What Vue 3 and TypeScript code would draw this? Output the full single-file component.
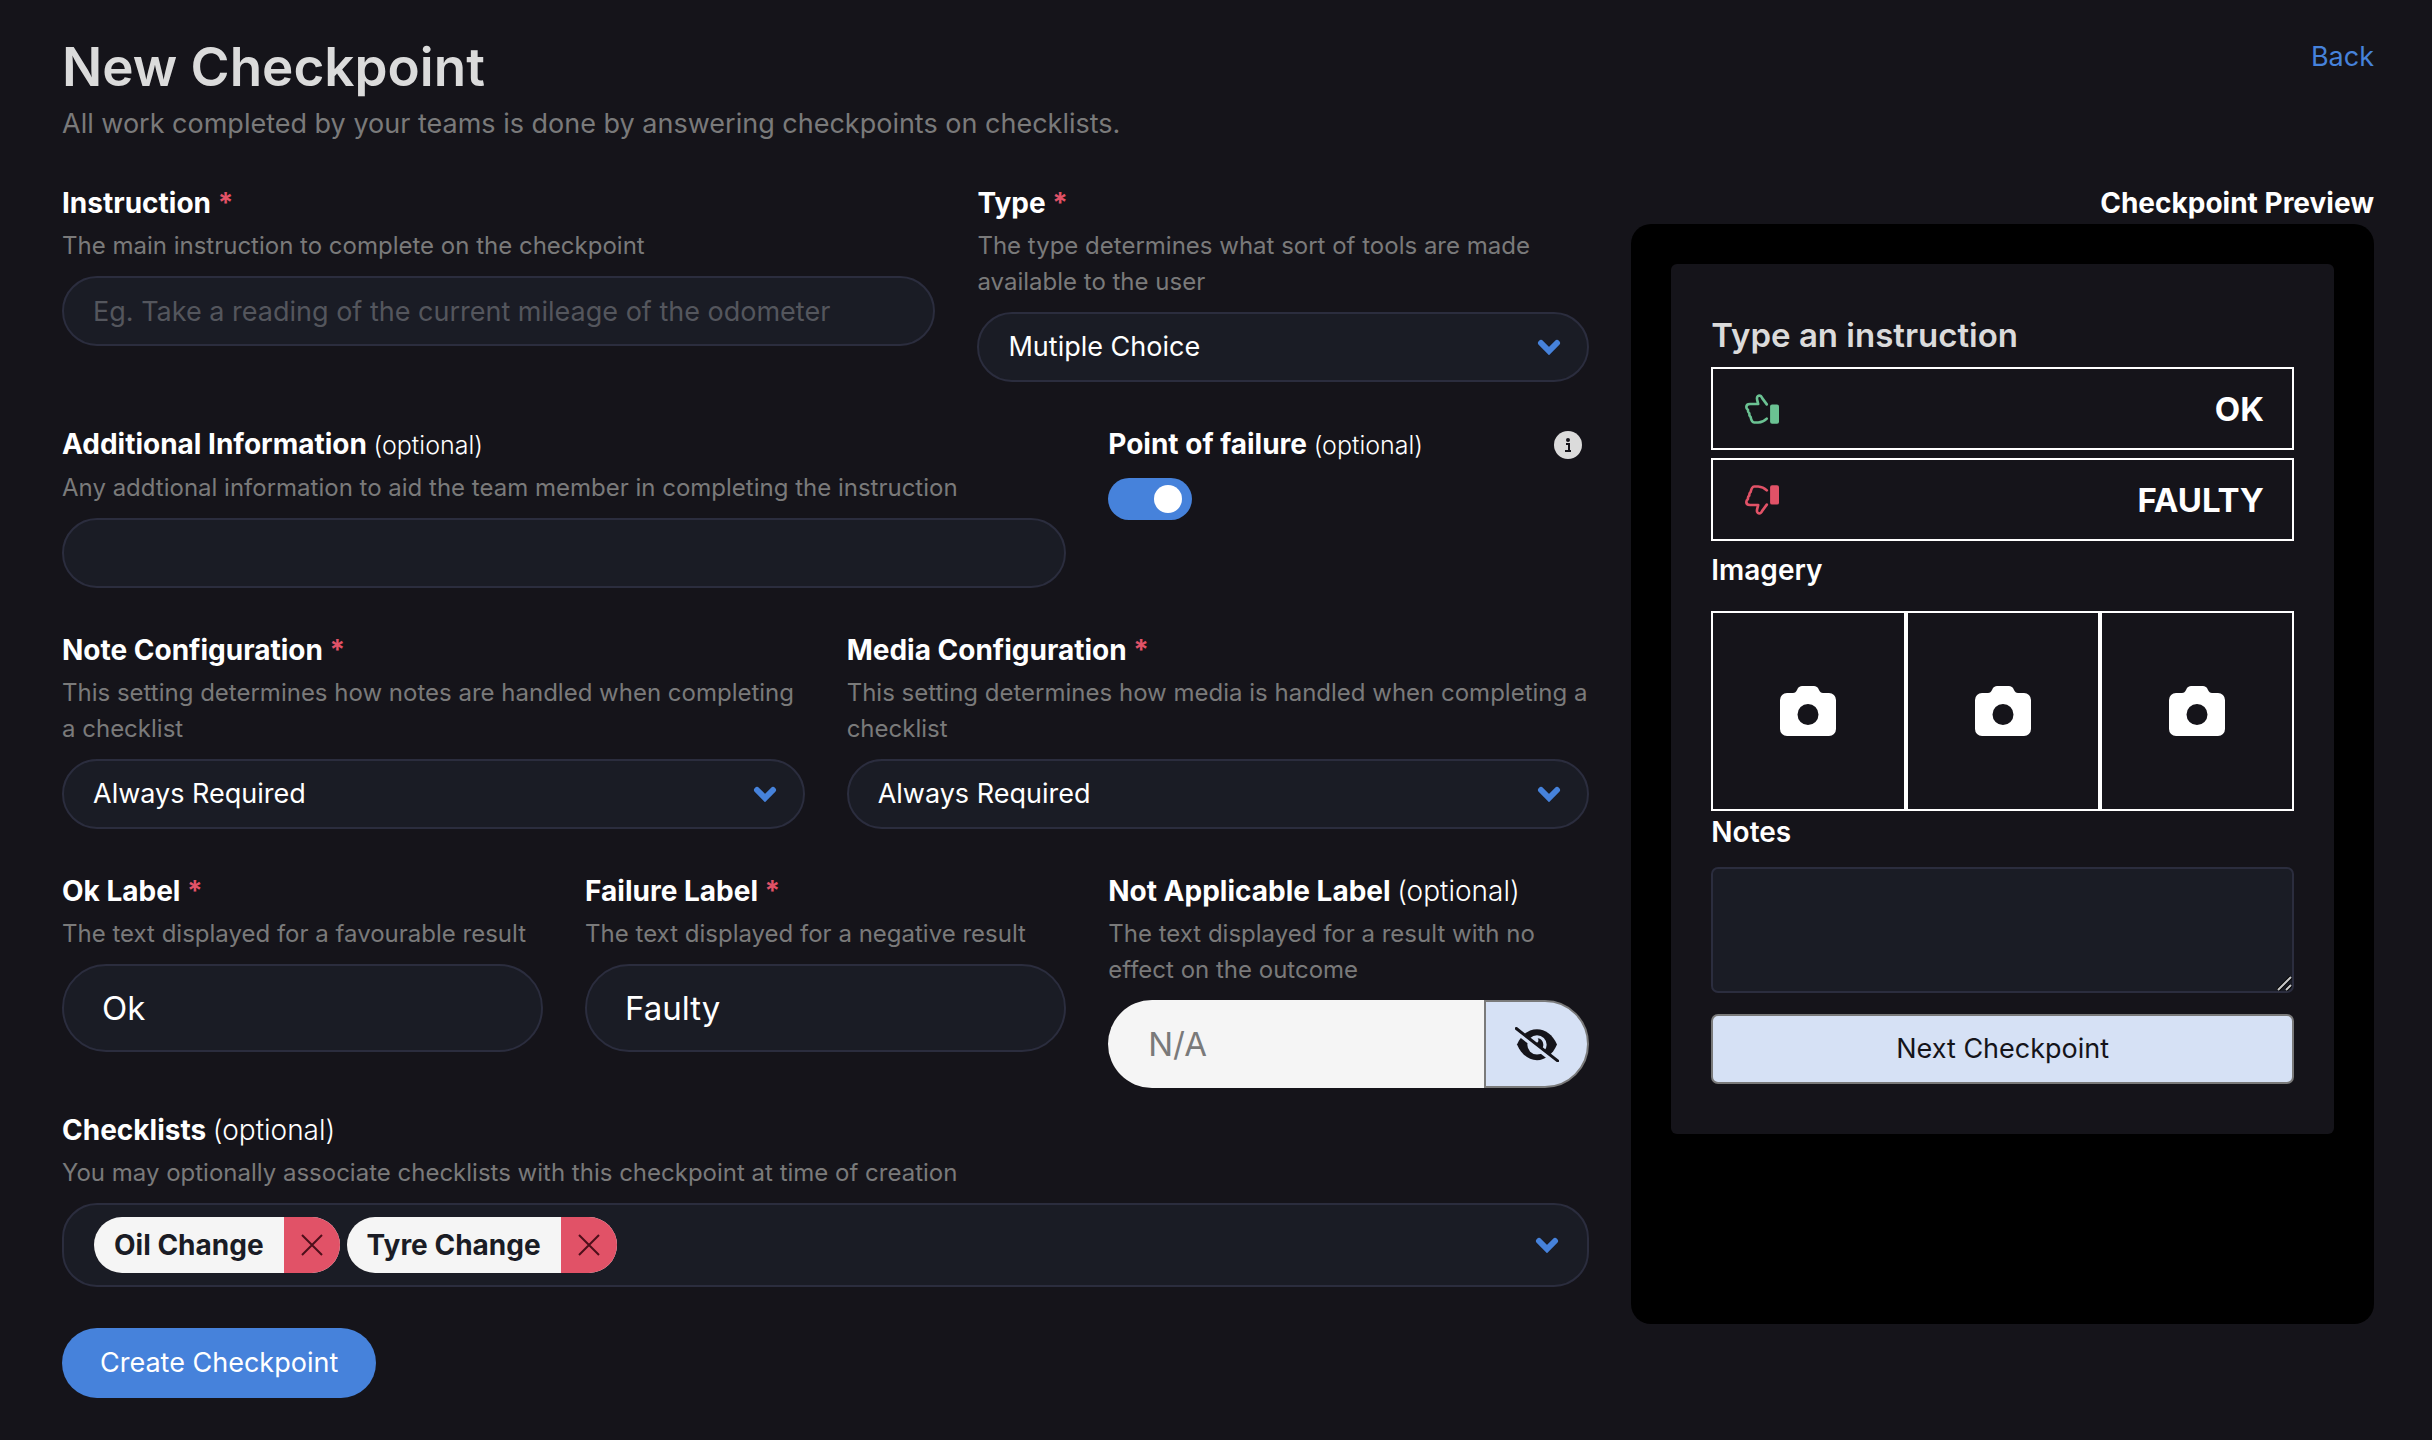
<script setup lang="ts">
import { ref } from 'vue'

const instruction = ref('')
const additional = ref('')
const pointOfFailure = ref(true)
const okLabel = ref('Ok')
const failureLabel = ref('Faulty')
const naLabel = ref('')
const notes = ref('')
const checklists = ref<string[]>(['Oil Change', 'Tyre Change'])

function removeChecklist(name: string): void {
  checklists.value = checklists.value.filter((item) => item !== name)
}
</script>

<template>
  <main class="page">
    <header class="header">
      <div>
        <h1 class="title">New Checkpoint</h1>
        <p class="subtitle">All work completed by your teams is done by answering checkpoints on checklists.</p>
      </div>
      <a class="back" href="#">Back</a>
    </header>

    <div class="layout">
      <form class="form" @submit.prevent>
        <div class="row">
          <div class="field span-7">
            <label class="label" for="instruction">Instruction <span class="required">*</span></label>
            <p class="help">The main instruction to complete on the checkpoint</p>
            <input id="instruction" v-model="instruction" class="input" type="text" placeholder="Eg. Take a reading of the current mileage of the odometer" />
          </div>
          <div class="field span-5">
            <label class="label" for="type">Type <span class="required">*</span></label>
            <p class="help">The type determines what sort of tools are made available to the user</p>
            <div class="select">
              <select id="type" class="input"><option>Mutiple Choice</option></select>
              <svg class="chevron" viewBox="0 0 24 16"><path d="M4 4l8 8 8-8" /></svg>
            </div>
          </div>
        </div>

        <div class="row">
          <div class="field span-8">
            <label class="label" for="additional">Additional Information <span class="optional small">(optional)</span></label>
            <p class="help">Any addtional information to aid the team member in completing the instruction</p>
            <input id="additional" v-model="additional" class="input" type="text" />
          </div>
          <div class="field span-4">
            <div class="label-line">
              <label class="label" for="failure-point">Point of failure <span class="optional small">(optional)</span></label>
              <svg class="info" viewBox="0 0 28 28">
                <circle cx="14" cy="14" r="14" fill="#dbdbdb" />
                <circle cx="14" cy="9" r="2" fill="#15141a" />
                <path d="M12 13h3v7M11 20h6" fill="none" stroke="#15141a" stroke-width="2" />
              </svg>
            </div>
            <input id="failure-point" v-model="pointOfFailure" class="switch" type="checkbox" />
          </div>
        </div>

        <div class="row">
          <div class="field span-6">
            <label class="label" for="note-config">Note Configuration <span class="required">*</span></label>
            <p class="help">This setting determines how notes are handled when completing a checklist</p>
            <div class="select">
              <select id="note-config" class="input"><option>Always Required</option></select>
              <svg class="chevron" viewBox="0 0 24 16"><path d="M4 4l8 8 8-8" /></svg>
            </div>
          </div>
          <div class="field span-6">
            <label class="label" for="media-config">Media Configuration <span class="required">*</span></label>
            <p class="help">This setting determines how media is handled when completing a checklist</p>
            <div class="select">
              <select id="media-config" class="input"><option>Always Required</option></select>
              <svg class="chevron" viewBox="0 0 24 16"><path d="M4 4l8 8 8-8" /></svg>
            </div>
          </div>
        </div>

        <div class="row">
          <div class="field span-4">
            <label class="label" for="ok-label">Ok Label <span class="required">*</span></label>
            <p class="help">The text displayed for a favourable result</p>
            <input id="ok-label" v-model="okLabel" class="input large" type="text" />
          </div>
          <div class="field span-4">
            <label class="label" for="failure-label">Failure Label <span class="required">*</span></label>
            <p class="help">The text displayed for a negative result</p>
            <input id="failure-label" v-model="failureLabel" class="input large" type="text" />
          </div>
          <div class="field span-4">
            <label class="label" for="na-label">Not Applicable Label <span class="optional">(optional)</span></label>
            <p class="help">The text displayed for a result with no effect on the outcome</p>
            <div class="addons">
              <input id="na-label" v-model="naLabel" class="input large muted" type="text" placeholder="N/A" disabled />
              <button class="toggle-visibility" type="button" aria-label="Enable label">
                <svg viewBox="165 138 132 104">
                  <path d="M171 190C184 160 206 144 231 144S278 160 291 190C278 220 256 237 231 237S184 220 171 190Z" fill="#15141a" />
                  <circle cx="231" cy="191" r="29" fill="#d6e1f5" />
                  <path d="M233 171c10 0 17 9 17 20 0 9-6 17-14 17l-16-16c0-4 1-8 3-10 2 3 7 4 10 1s3-8 0-12z" fill="#15141a" />
                  <path d="M168 151L285 243" stroke="#d6e1f5" stroke-width="13" />
                  <path d="M169 142L293 239" stroke="#15141a" stroke-width="9" stroke-linecap="round" />
                </svg>
              </button>
            </div>
          </div>
        </div>

        <div class="row tight">
          <div class="field span-12">
            <span id="checklists-label" class="label">Checklists <span class="optional">(optional)</span></span>
            <p class="help">You may optionally associate checklists with this checkpoint at time of creation</p>
            <div class="multi" role="group" aria-labelledby="checklists-label">
              <span v-for="name in checklists" :key="name" class="tag">
                <span class="tag-name">{{ name }}</span>
                <button class="tag-remove" type="button" :aria-label="`Remove ${name}`" @click="removeChecklist(name)">
                  <svg viewBox="0 0 22 22"><path d="M1 1l20 20M21 1L1 21" /></svg>
                </button>
              </span>
              <button class="open" type="button" aria-label="Show checklists">
                <svg class="chevron" viewBox="0 0 24 16"><path d="M4 4l8 8 8-8" /></svg>
              </button>
            </div>
          </div>
        </div>

        <button class="create" type="submit">Create Checkpoint</button>
      </form>

      <aside class="preview">
        <h2 class="preview-title">Checkpoint Preview</h2>
        <div class="device">
          <div class="screen">
            <h3 class="screen-title">Type an instruction</h3>
            <button class="answer" type="button">
              <svg class="thumb up" viewBox="75 72 103 90">
                <path d="M141 103L127 84Q124 76 118 76Q109 78 112 90L115 102H90Q79 102 79 111Q79 117 84 120Q83 127 88 130Q87 137 92 141Q95 157 103 158H115Q130 157 141 146" />
                <rect x="151" y="103" width="27" height="59" rx="6" />
              </svg>
              <span>OK</span>
            </button>
            <button class="answer" type="button">
              <svg class="thumb down" viewBox="75 72 103 90">
                <g transform="matrix(1 0 0 -1 0 234)">
                  <path d="M141 103L127 84Q124 76 118 76Q109 78 112 90L115 102H90Q79 102 79 111Q79 117 84 120Q83 127 88 130Q87 137 92 141Q95 157 103 158H115Q130 157 141 146" />
                  <rect x="151" y="103" width="27" height="59" rx="6" />
                </g>
              </svg>
              <span>FAULTY</span>
            </button>
            <h4 class="section">Imagery</h4>
            <div class="images">
              <button v-for="n in 3" :key="n" class="image" type="button" :aria-label="`Add image ${n}`">
                <svg viewBox="0 0 56 50">
                  <path fill-rule="evenodd" fill="#fff" d="M7 7h6c2 0 3-1 4-3l1-2c1-1 2-2 4-2h12c2 0 3 1 4 2l1 2c1 2 2 3 4 3h6a7 7 0 0 1 7 7v29a7 7 0 0 1-7 7H7a7 7 0 0 1-7-7V14a7 7 0 0 1 7-7zM28 18a10.500 10.500 0 1 0 0 21a10.500 10.500 0 1 0 0-21z" />
                </svg>
              </button>
            </div>
            <label class="section" for="notes">Notes</label>
            <textarea id="notes" v-model="notes" class="notes"></textarea>
            <button class="next" type="button">Next Checkpoint</button>
          </div>
        </div>
      </aside>
    </div>
  </main>
</template>

<style>
body {
  margin: 0;
  background: #15141a;
}
</style>

<style scoped>
.page,
.page * {
  box-sizing: border-box;
}

.page {
  min-height: 100vh;
  padding: 36px 58px 40px 62px;
  background: #15141a;
  color: #fff;
  font-family: Inter, 'Liberation Sans', sans-serif;
  font-size: 27px;
  line-height: 42px;
}

h1,
h2,
h3,
h4,
p {
  margin: 0;
}

button,
input,
select,
textarea {
  margin: 0;
  font: inherit;
}

button {
  padding: 0;
  cursor: pointer;
}

svg {
  display: block;
}

.header {
  display: flex;
  justify-content: space-between;
  align-items: flex-start;
  margin-bottom: 37px;
}

.title {
  margin-bottom: 4px;
  color: #dbdbdb;
  font-size: 53px;
  font-weight: 600;
  line-height: 63px;
}

.subtitle {
  color: #7a7a7a;
}

.back {
  color: #4682db;
  text-decoration: none;
}

.layout,
.row {
  display: grid;
  grid-template-columns: repeat(12, minmax(0, 1fr));
  column-gap: 42px;
  align-items: start;
}

.form {
  grid-column: span 8;
}

.preview {
  grid-column: span 4;
}

.row + .row {
  margin-top: 41px;
}

.row + .row.tight {
  margin-top: 21px;
}

.span-4 { grid-column: span 4; }
.span-5 { grid-column: span 5; }
.span-6 { grid-column: span 6; }
.span-7 { grid-column: span 7; }
.span-8 { grid-column: span 8; }
.span-12 { grid-column: span 12; }

.label {
  display: block;
  font-size: 28px;
  font-weight: 700;
}

.required {
  color: #e15267;
}

.optional {
  font-weight: 300;
}

.small {
  font-size: 25px;
}

.help {
  margin: 4px 0 12px;
  color: #7a7a7a;
  font-size: 24px;
  line-height: 36px;
}

.input {
  display: block;
  width: 100%;
  height: 70px;
  padding: 0 29px;
  border: 2px solid #2b2d3e;
  border-radius: 44px;
  outline: none;
  background: #1a1c25;
  color: #fff;
  appearance: none;
}

.input::placeholder {
  color: #54565d;
  opacity: 1;
}

.input.large {
  height: 88px;
  padding: 0 38px;
  font-size: 33px;
}

.select {
  display: grid;
  align-items: center;
}

.select > * {
  grid-area: 1 / 1;
}

.select .chevron {
  justify-self: end;
  margin-right: 28px;
  pointer-events: none;
}

.chevron {
  width: 24px;
  height: 16px;
  fill: none;
  stroke: #4682db;
  stroke-width: 6;
  stroke-linecap: round;
}

.label-line {
  display: flex;
  justify-content: space-between;
  align-items: center;
  padding-right: 7px;
}

.info {
  width: 28px;
  height: 28px;
}

.switch {
  display: flex;
  align-items: center;
  justify-content: flex-end;
  width: 84px;
  height: 42px;
  margin-top: 12px;
  padding: 0 10px;
  border-radius: 21px;
  background: #4682db;
  appearance: none;
}

.switch::before {
  content: '';
  width: 28px;
  height: 28px;
  border-radius: 50%;
  background: #fff;
}

.switch:not(:checked) {
  justify-content: flex-start;
  background: #7a7a7a;
}

.addons {
  display: flex;
}

.input.muted {
  flex: 1;
  min-width: 0;
  border-color: #f5f5f5;
  border-right: 0;
  border-radius: 44px 0 0 44px;
  background: #f5f5f5;
}

.input.muted::placeholder {
  color: #7a7a7a;
}

.toggle-visibility {
  display: flex;
  align-items: center;
  justify-content: center;
  width: 105px;
  border: 2px solid #7a7a7a;
  border-radius: 0 44px 44px 0;
  background: #d6e1f5;
}

.toggle-visibility svg {
  width: 44px;
  height: 35px;
}

.multi {
  display: flex;
  align-items: center;
  gap: 7px;
  height: 84px;
  padding: 0 28px 0 30px;
  border: 2px solid #2b2d3e;
  border-radius: 35px;
  background: #1a1c25;
}

.tag {
  display: flex;
  height: 56px;
  border-radius: 28px;
  overflow: hidden;
  background: #f5f5f5;
  color: #1a1c25;
  font-size: 28px;
  font-weight: 700;
  line-height: 56px;
}

.tag-name {
  padding: 0 20px;
}

.tag-remove {
  display: flex;
  align-items: center;
  justify-content: center;
  width: 56px;
  border: 0;
  background: #e15267;
}

.tag-remove svg {
  width: 22px;
  height: 22px;
  stroke: #4d0f1a;
  stroke-width: 2;
}

.open {
  margin-left: auto;
  border: 0;
  background: none;
}

.create {
  height: 70px;
  margin-top: 41px;
  padding: 0 38px;
  border: 0;
  border-radius: 35px;
  background: #4682db;
  color: #fff;
}

.preview-title {
  font-size: 28px;
  font-weight: 700;
  line-height: 42px;
  text-align: right;
}

.device {
  min-height: 1100px;
  padding: 40px;
  border-radius: 20px;
  background: #000;
}

.screen {
  display: flex;
  flex-direction: column;
  padding: 50px 40px;
  border-radius: 6px;
  background: #15141a;
}

.screen-title {
  margin-bottom: 11px;
  color: #dbdbdb;
  font-size: 33px;
  font-weight: 600;
  line-height: 42px;
}

.answer {
  display: flex;
  align-items: center;
  justify-content: space-between;
  height: 83px;
  margin-bottom: 8px;
  padding: 0 28px 0 32px;
  border: 2px solid #fff;
  background: none;
  color: #fff;
  font-size: 33px;
  font-weight: 700;
}

.thumb {
  width: 34px;
  height: 30px;
}

.thumb path {
  fill: none;
  stroke: currentColor;
  stroke-width: 8;
  stroke-linecap: round;
  stroke-linejoin: round;
}

.thumb rect {
  fill: currentColor;
}

.up {
  color: #6bc293;
}

.down {
  color: #e15267;
}

.section {
  margin-bottom: 14px;
  font-size: 28px;
  font-weight: 600;
  line-height: 42px;
}

.images {
  display: flex;
  padding-top: 6px;
}

.image {
  display: flex;
  flex: 1;
  align-items: center;
  justify-content: center;
  height: 200px;
  border: 2px solid #fff;
  background: none;
}

.image svg {
  width: 56px;
  height: 50px;
}

.notes {
  height: 126px;
  margin-bottom: 21px;
  padding: 18px 24px;
  border: 2px solid #2b2d3e;
  border-radius: 7px;
  outline: none;
  background: #1a1c25;
  color: #fff;
  resize: vertical;
}

.notes::-webkit-resizer {
  background: url("data:image/svg+xml,%3Csvg xmlns='http://www.w3.org/2000/svg' width='15' height='15'%3E%3Cpath d='M1 14L14 1M9 14L14 9' stroke='%23000' stroke-width='4'/%3E%3Cpath d='M1 14L14 1M9 14L14 9' stroke='%23c8c8c8' stroke-width='2'/%3E%3C/svg%3E") no-repeat;
}

.next {
  height: 70px;
  border: 2px solid #7a7a7a;
  border-radius: 7px;
  background: #d6e1f5;
  color: #15141a;
}
</style>
